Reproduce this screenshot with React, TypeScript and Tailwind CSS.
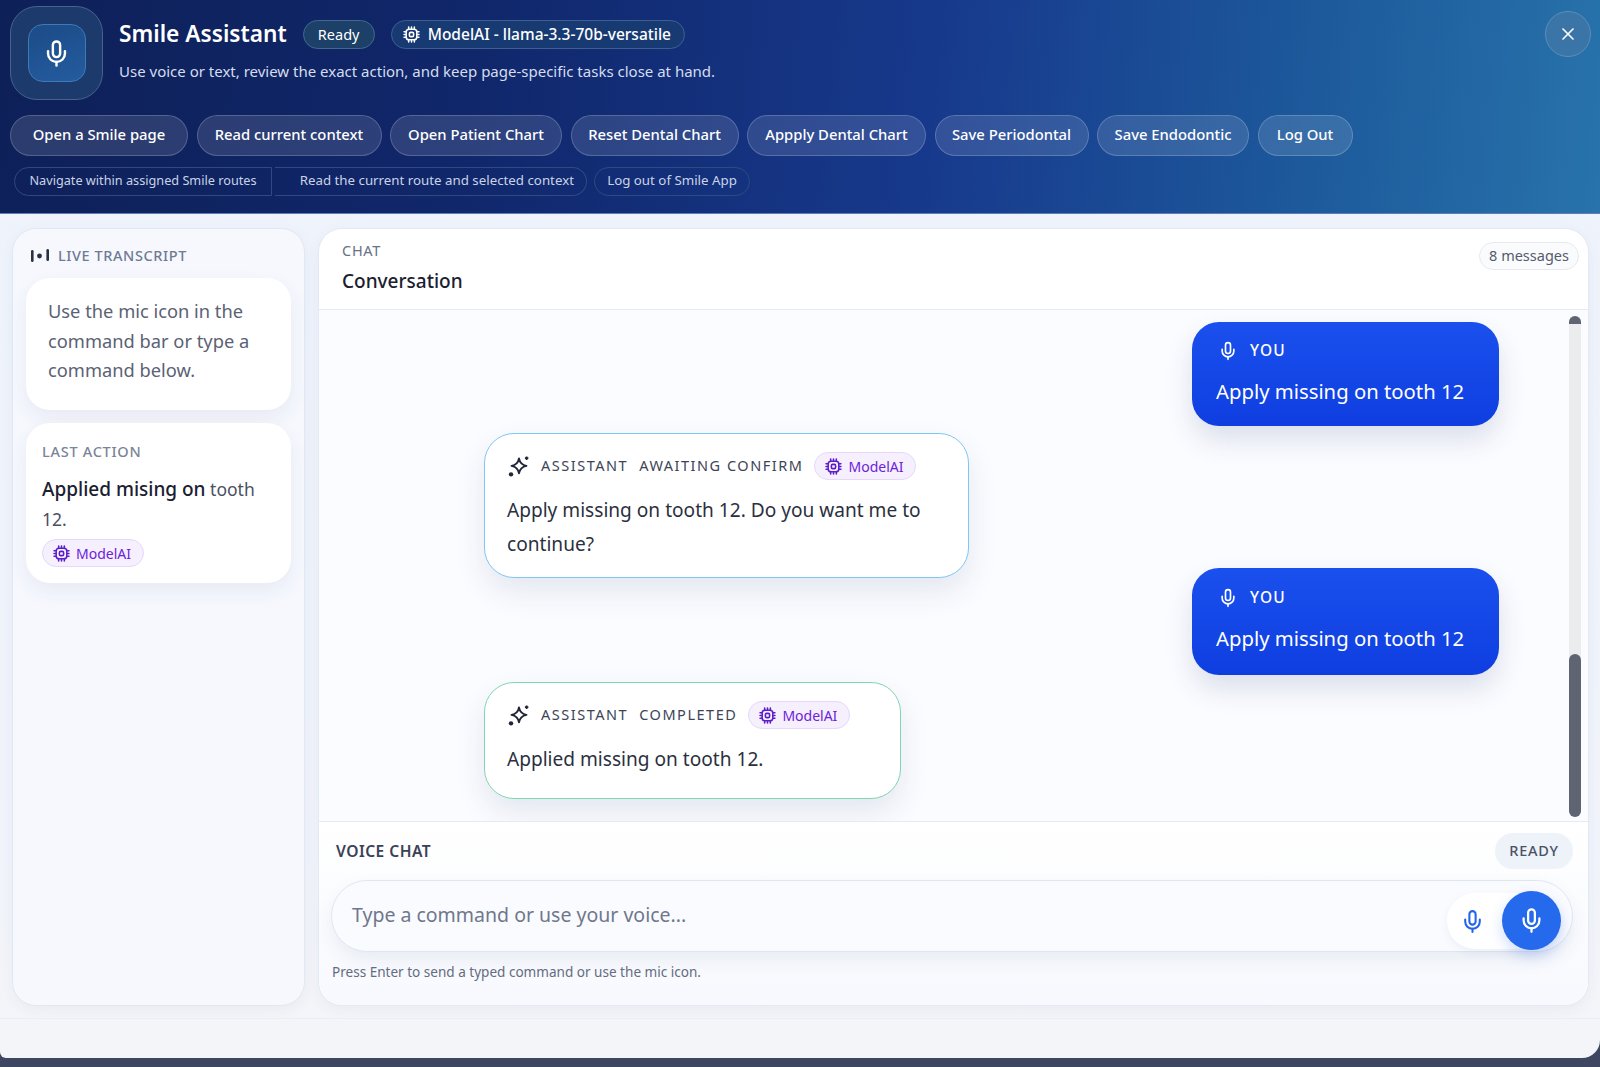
import { Mic, X } from "lucide-react";

const actions = [
  { label: "Open a Smile page", width: "w-[178px]" },
  { label: "Read current context", width: "w-[185px]" },
  { label: "Open Patient Chart", width: "w-[172px]" },
  { label: "Reset Dental Chart", width: "w-[168px]" },
  { label: "Appply Dental Chart", width: "w-[179px]" },
  { label: "Save Periodontal", width: "w-[154px]" },
  { label: "Save Endodontic", width: "w-[152px]" },
  { label: "Log Out", width: "w-[95px]" },
];

function ChipIcon({ className }: { className?: string }) {
  return (
    <svg viewBox="0 0 24 24" fill="none" stroke="currentColor" strokeWidth="2.2" strokeLinecap="round" className={className}>
      <rect x="4.5" y="4.5" width="15" height="15" rx="4" />
      <rect x="9" y="9" width="6" height="6" rx="2" />
      <path d="M8 1.5v2M12 1.5v2M16 1.5v2M8 20.5v2M12 20.5v2M16 20.5v2M1.5 8h2M1.5 12h2M1.5 16h2M20.5 8h2M20.5 12h2M20.5 16h2" />
    </svg>
  );
}

function SparkIcon() {
  return (
    <svg viewBox="0 0 24 24" className="size-[23px] shrink-0 text-[#1f2638]" fill="none" stroke="currentColor" strokeWidth="2" strokeLinejoin="round">
      <path d="M12.5 3.500c.9 4.800 3 7 7.800 7.800-4.800.9-6.900 3-7.800 7.800-.8-4.800-3-6.900-7.800-7.800 4.800-.8 7-3 7.800-7.800z" />
      <circle cx="4.2" cy="20.200" r="2.300" fill="currentColor" stroke="none" />
      <path d="M20.500 1.500v3.600M18.700 3.300h3.600" strokeWidth="1.8" />
    </svg>
  );
}

function ModelBadge({ className = "" }: { className?: string }) {
  return (
    <span className={`flex h-[28px] items-center gap-[6px] rounded-full border border-[#e6d8fb] bg-[#f5effe] pl-[10px] pr-[12px] text-[14px] text-[#6d22d9] ${className}`}>
      <ChipIcon className="size-[17px] text-[#5b1ec9]" />
      ModelAI
    </span>
  );
}

function UserBubble({ className = "", top }: { className?: string; top: string }) {
  return (
    <div className={`ml-auto mr-[70px] w-[307px] rounded-[27px] bg-[linear-gradient(180deg,#1a50ee,#0f3ee0)] px-6 text-white shadow-[0_14px_28px_rgba(30,50,110,0.14)] ${top} ${className}`}>
      <div className="flex items-center gap-[12px] pl-[2px] text-[15.5px] font-medium tracking-[0.08em]">
        <Mic className="size-[20px]" strokeWidth={2} />
        YOU
      </div>
      <p className="mt-[14px] text-[20.3px] leading-[30px]">Apply missing on tooth 12</p>
    </div>
  );
}

function AssistantBubble({ status, border, text, top, className = "" }: { status: string; border: string; text: string; top: string; className?: string }) {
  return (
    <div className={`ml-[165px] rounded-[30px] border-[1.5px] bg-white px-[22px] shadow-[0_14px_30px_rgba(30,50,110,0.10)] ${border} ${top} ${className}`}>
      <div className="flex items-center text-[14.5px] tracking-[0.105em] text-[#3d4456]">
        <SparkIcon />
        <span className="ml-[11px]">ASSISTANT</span>
        <span className="ml-[11px]">{status}</span>
        <ModelBadge className="ml-[11px] tracking-normal" />
      </div>
      <p className="mt-[13px] text-[19.1px] leading-[34px] text-[#2b3040]">{text}</p>
    </div>
  );
}

export default function App() {
  return (
    <div className="h-[1067px] overflow-hidden bg-[#3f4662] font-['Noto_Sans',sans-serif]">
      <div className="flex h-[1058px] flex-col overflow-hidden rounded-bl-[6px] rounded-br-[18px] bg-[linear-gradient(180deg,#edf3fc,#f1f4fb_80%,#f4f5f8)]">
        <header className="h-[214px] shrink-0 border-b border-[#5d7fb5] bg-[linear-gradient(96deg,#0e2058_0%,#10276b_30%,#17398c_58%,#1d5a9c_82%,#2873ab_100%)] pl-[10px] pr-[9px] pt-[6px] text-white">
          <div className="flex items-start">
            <div className="flex h-[94px] w-[93px] items-center justify-center rounded-[27px] border border-[#47628f] bg-[#1d3a6d]">
              <div className="flex size-[58px] items-center justify-center rounded-[15px] border border-[#3f7ab8] bg-[linear-gradient(160deg,#1c4b87,#245c9f)]">
                <Mic className="size-[29px]" strokeWidth={2} />
              </div>
            </div>
            <div className="ml-[16px] flex-1 pt-[14px]">
              <div className="flex h-[29px] items-center">
                <h1 className="text-[22.7px] font-semibold leading-none">Smile Assistant</h1>
                <span className="ml-[16px] flex h-[29px] w-[72px] items-center justify-center rounded-full border border-[#3f6a8e] bg-[#1c4068] text-[14.5px]">Ready</span>
                <span className="ml-[16px] flex h-[29px] w-[294px] items-center gap-[8px] rounded-full border border-[#3f5f93] bg-[#183a72] pl-[11px] text-[15.5px] font-medium">
                  <ChipIcon className="size-[17px]" />
                  ModelAI - llama-3.3-70b-versatile
                </span>
              </div>
              <p className="mt-[10px] text-[15px] leading-[24px] text-[#d5dded]">
                Use voice or text, review the exact action, and keep page-specific tasks close at hand.
              </p>
            </div>
            <button className="mt-[5px] flex size-[46px] items-center justify-center rounded-full border border-[#5b8fb8] bg-[#3b74a6]">
              <X className="size-[20px]" />
            </button>
          </div>
          <div className="mt-[15px] flex gap-[8.5px]">
            {actions.map((a) => (
              <button key={a.label} className={`flex h-[41px] items-center justify-center rounded-full border border-white/20 bg-white/[0.12] pb-[2px] text-[14.8px] font-medium ${a.width}`}>
                {a.label}
              </button>
            ))}
          </div>
          <div className="ml-[4px] mt-[11px] flex text-[13.3px] text-[#c9d3e6]">
            <span className="flex h-[29px] w-[258px] items-center justify-center rounded-l-full border border-[#2f4a80] pb-[2px] text-[12.7px]">Navigate within assigned Smile routes</span>
            <span className="ml-[3px] flex h-[29px] w-[312px] items-center justify-end rounded-r-full border border-l-0 border-[#2f4a80] pb-[2px] pr-[12px]">Read the current route and selected context</span>
            <span className="ml-[7px] flex h-[29px] w-[156px] items-center justify-center rounded-full border border-[#2f4a80] pb-[2px]">Log out of Smile App</span>
          </div>
        </header>

        <div className="box-content flex h-[778px] shrink-0 gap-[13px] pl-[12px] pr-[11px] pt-[14px]">
          <aside className="flex w-[293px] shrink-0 flex-col rounded-[24px] border border-[#e2e8f3] bg-[#f6f8fe] px-[13px] pt-[17px] shadow-[0_4px_14px_rgba(40,60,110,0.05)]">
            <div className="flex h-[20px] items-center pl-[5px] text-[14.5px] font-medium tracking-[0.04em] text-[#6f7a93]">
              <svg viewBox="0 0 18 14" className="h-[14px] w-[18px] text-[#2b3145]" fill="currentColor">
                <rect x="0" y="1" width="2.600" height="12" rx="1.300" />
                <circle cx="8.500" cy="7" r="2.400" />
                <rect x="15.400" y="0" width="2.600" height="12" rx="1.300" />
              </svg>
              <span className="ml-[9px]">LIVE TRANSCRIPT</span>
            </div>
            <div className="mt-[12px] h-[132px] rounded-[24px] bg-white px-[22px] pt-[18px] text-[18.3px] leading-[29.5px] text-[#5b6274] shadow-[0_8px_20px_rgba(40,60,110,0.07)]">
              Use the mic icon in the command bar or type a command below.
            </div>
            <div className="mt-[13px] h-[160px] rounded-[24px] bg-white px-[16px] pt-[18px] shadow-[0_8px_20px_rgba(40,60,110,0.07)]">
              <div className="text-[14.5px] font-medium leading-[20px] tracking-[0.05em] text-[#7b8498]">LAST ACTION</div>
              <p className="mt-[13px] text-[17.5px] leading-[30px] text-[#4a5062]">
                <span className="text-[19px] font-medium text-[#1a2030]">Applied mising on</span> <span>tooth</span>
                <br />
                <span>12.</span>
              </p>
              <ModelBadge className="mt-[5px] w-fit" />
            </div>
          </aside>

          <main className="flex min-w-0 flex-1 flex-col overflow-hidden rounded-[24px] border border-[#e4e9f3] bg-white shadow-[0_4px_14px_rgba(40,60,110,0.05)]">
            <div className="flex h-[81px] shrink-0 items-start justify-between border-b border-[#e6eaf2] pl-[23px] pr-[9px]">
              <div className="pt-[11px]">
                <div className="text-[14.5px] leading-[20px] tracking-[0.05em] text-[#687186]">CHAT</div>
                <div className="mt-[8px] text-[19px] font-medium leading-[26px] text-[#1a2030]">Conversation</div>
              </div>
              <span className="mt-[13px] flex h-[28px] w-[100px] items-center justify-center rounded-full border border-[#e6e9f0] bg-[#fafbfd] text-[14.5px] text-[#545b6d]">8 messages</span>
            </div>

            <div className="flex min-h-0 flex-1 bg-[#fbfcff]">
              <div className="min-w-0 flex-1 pt-[12px]">
                <UserBubble className="h-[104px]" top="pt-[17px]" />
                <AssistantBubble
                  className="mt-[7px] h-[145px] w-[485px]"
                  top="pt-[18px]"
                  border="border-[#7fc6f6]"
                  status="AWAITING CONFIRM"
                  text="Apply missing on tooth 12. Do you want me to continue?"
                />
                <UserBubble className="-mt-[10px] h-[107px]" top="pt-[18px]" />
                <AssistantBubble
                  className="mt-[7px] h-[117px] w-[417px]"
                  top="pt-[18px]"
                  border="border-[#80d6b2]"
                  status="COMPLETED"
                  text="Applied missing on tooth 12."
                />
              </div>
              <div className="mr-[7px] mt-[6px] flex h-[501px] w-[12px] shrink-0 flex-col justify-between rounded-full bg-[#ececee]">
                <div className="h-[8px] rounded-t-full bg-[#5f6472]" />
                <div className="h-[163px] rounded-full bg-[#5f6472]" />
              </div>
            </div>

            <div className="h-[184px] shrink-0 border-t border-[#e6eaf2] bg-[linear-gradient(180deg,#ffffff,#f7f9fe)] pl-[12px] pr-[15px]">
              <div className="flex h-[58px] items-start justify-between pl-[5px] pt-[11px]">
                <span className="pt-[8px] text-[15.6px] font-semibold leading-[20px] tracking-[0.03em] text-[#3a4156]">VOICE CHAT</span>
                <span className="flex h-[36px] w-[78px] items-center justify-center rounded-full bg-[#eef2f9] text-[14.5px] font-medium tracking-[0.05em] text-[#4a5166]">READY</span>
              </div>
              <div className="flex h-[72px] items-center rounded-full border border-[#dfe6f2] bg-[#fafbff] pl-[20px] pr-[11px] shadow-[0_8px_18px_rgba(40,60,110,0.08)]">
                <span className="flex-1 pb-[2px] text-[19.5px] text-[#6f778c]">Type a command or use your voice...</span>
                <div className="relative mt-[10px] flex h-[56px] w-[114px] items-center rounded-full bg-white pl-[13px] shadow-[0_4px_10px_rgba(40,60,110,0.06)]">
                  <Mic className="size-[25px] text-[#2563eb]" strokeWidth={2} />
                  <button className="absolute -top-[2px] right-0 flex size-[59px] items-center justify-center rounded-full bg-[#2569ec] text-white shadow-[0_6px_14px_rgba(37,99,235,0.22)]">
                    <Mic className="size-[27px]" strokeWidth={2} />
                  </button>
                </div>
              </div>
              <p className="ml-[1px] mt-[10px] text-[13.55px] leading-[20px] text-[#646c80]">Press Enter to send a typed command or use the mic icon.</p>
            </div>
          </main>
        </div>

        <div className="mt-[12px] flex-1 border-t border-[#e9edf5]" />
      </div>
    </div>
  );
}
